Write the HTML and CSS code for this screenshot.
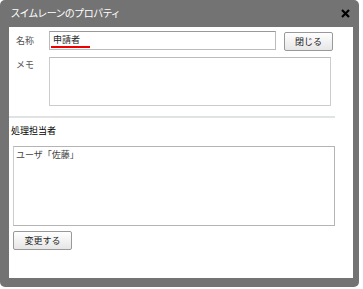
FILE: index.html
```html
<!DOCTYPE html>
<html lang="ja">
<head>
<meta charset="utf-8">
<title>スイムレーンのプロパティ</title>
<link rel="stylesheet" href="styles.css">
</head>
<body>

<div class="dialog">

	<div class="titlebar">
		<span class="title">スイムレーンのプロパティ</span>
		<svg class="close" width="9" height="9" viewBox="0 0 9 9"><path d="M1 1L8 8M8 1L1 8" stroke="#000" stroke-width="2.2"/></svg>
	</div>

	<div class="body">

		<div class="row">
			<span class="label">名称</span>
			<div class="name-input"><span class="misspelt">申請者</span></div>
			<button class="btn btn-close">閉じる</button>
		</div>

		<div class="row memo-row">
			<span class="label">メモ</span>
			<div class="memo"></div>
		</div>

		<div class="rule"></div>

		<div class="section">
			<div class="section-label">処理担当者</div>
			<div class="assignee">ユーザ「佐藤」</div>
			<button class="btn btn-change">変更する</button>
		</div>

	</div>

</div>

</body>
</html>
```

FILE: styles.css
```css
html * {margin:0; padding:0;}
body {background:#fff; font:9px/1.2 "Noto Sans CJK JP", "DejaVu Sans", sans-serif; color:#333;}

.dialog {width:359px; height:287px; background:#737373; border-radius:5px; display:flex; flex-direction:column; box-sizing:border-box; padding:0 6px 9px 9px;}

.titlebar {height:27px; display:flex; align-items:center; justify-content:space-between;}
.title {color:#fff; font-size:10px; padding:0 0 1px 2px; font-feature-settings:"palt";}
.close {margin-right:3px;}

.body {flex:1; background:#fff; padding:4px 0 0 0;}

.row {display:flex; align-items:flex-start; padding-left:7px;}
.label {width:33px; color:#555; padding-top:5px;}

.name-input {width:222px; height:17px; border:1px solid #bbb; border-top-color:#999; padding-left:3px; display:flex; align-items:center;}
.misspelt {border-bottom:2px solid #e00; margin-left:-2px; padding:0 10px 0 2px; line-height:13px; color:#222;}

.btn {font:9px "Noto Sans CJK JP", sans-serif; color:#222; border:1px solid #999; border-radius:2px; background:linear-gradient(#fff, #e6e6e6); height:19px;}
.btn-close {width:49px; margin:1px 0 0 8px;}

.memo-row {margin-top:6px;}
.memo {width:280px; height:47px; border:1px solid #ccc; border-top-color:#bbb;}
.memo-row .label {padding-top:3px;}

.rule {width:326px; height:2px; background:#dfe3e3; margin-top:10px;}

.section {padding-left:4px;}
.section-label {color:#000; padding-top:8px; margin-left:-2px; height:12px;}
.assignee {width:318px; height:75px; border:1px solid #b4b4b4; border-left-color:#ccc; margin-top:8px; padding:3px 0 0 2px; color:#444;}
.btn-change {width:59px; margin-top:5px;}
```
